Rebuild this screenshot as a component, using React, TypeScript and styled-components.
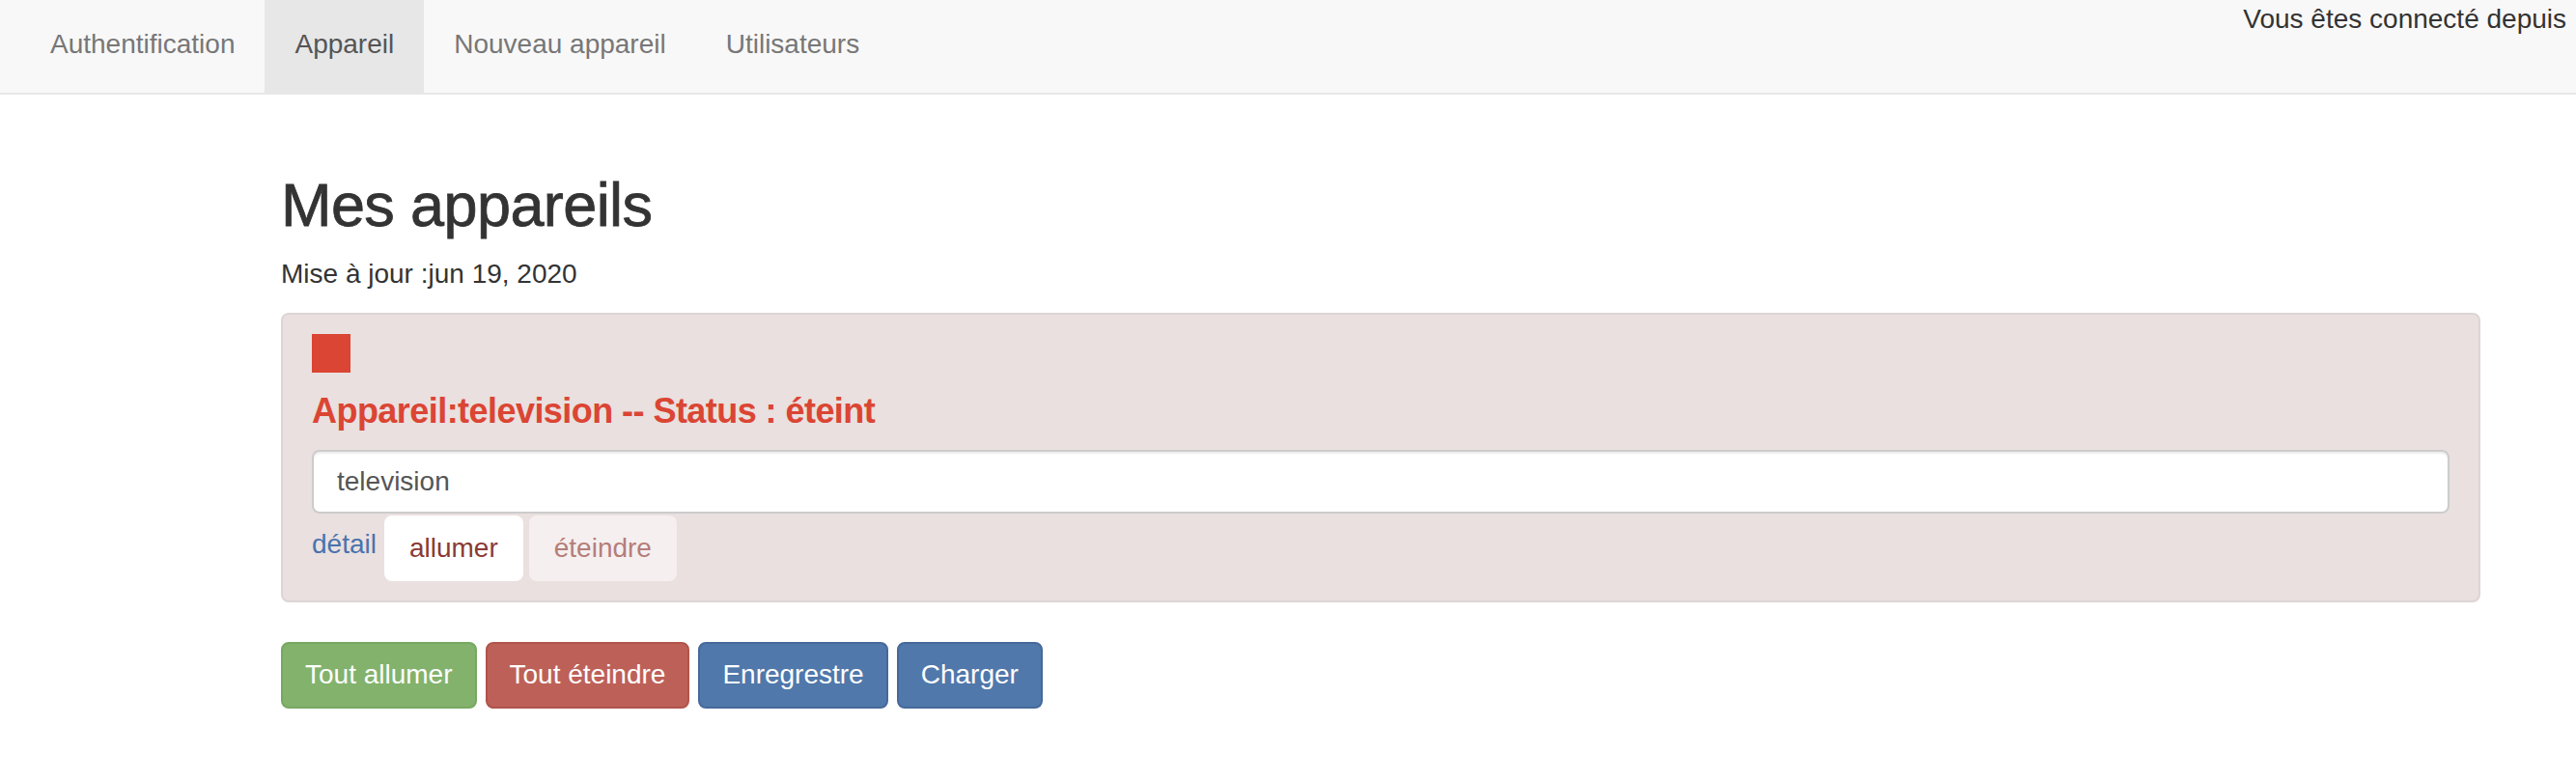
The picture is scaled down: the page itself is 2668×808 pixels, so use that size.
import React from "react";
import styled, { createGlobalStyle } from "styled-components";

const Global = createGlobalStyle`
  html, body { margin: 0; padding: 0; background: #ffffff; }
  body { font-family: "Liberation Sans", Arial, sans-serif; color: #333; }
  * { box-sizing: border-box; }
`;

const NavBar = styled.header`
  display: flex;
  justify-content: space-between;
  align-items: flex-start;
  height: 98px;
  background: #f8f8f8;
  border-bottom: 2px solid #e7e7e7;
`;

const NavList = styled.ul`
  display: flex;
  margin: 0;
  padding: 0 0 0 21px;
  list-style: none;
`;

const NavItem = styled.li<{ $active?: boolean }>`
  padding: 26px 31px 30px;
  font-size: 28px;
  line-height: 40px;
  color: ${(p) => (p.$active ? "#555" : "#777")};
  background: ${(p) => (p.$active ? "#e7e7e7" : "transparent")};
  white-space: nowrap;
`;

const NavText = styled.div`
  padding-right: 10px;
  font-size: 28px;
  line-height: 40px;
  color: #333;
  white-space: nowrap;
`;

const Main = styled.main`
  padding: 80px 99px 40px 291px;
`;

const Title = styled.h1`
  margin: 0 0 17px;
  font-size: 63px;
  font-weight: 400;
  line-height: 1.1;
  letter-spacing: -0.6px;
  color: #333;
  -webkit-text-stroke: 0.8px #333;
`;

const UpdateLine = styled.p`
  margin: 0 0 20px;
  font-size: 28px;
  line-height: 40px;
  color: #333;
`;

const DevicePanel = styled.section`
  display: flex;
  flex-direction: column;
  padding: 20px 30px;
  background: #e9e0df;
  border: 2px solid #ddd5d4;
  border-radius: 8px;
  margin-bottom: 41px;
`;

const StatusSquare = styled.div<{ $on?: boolean }>`
  width: 40px;
  height: 40px;
  background: ${(p) => (p.$on ? "#5cb85c" : "#db4533")};
`;

const DeviceTitle = styled.h4`
  margin: 20px 0 20px;
  font-size: 36px;
  font-weight: 700;
  line-height: 39.6px;
  letter-spacing: -0.55px;
  color: #db4533;
`;

const NameInput = styled.input`
  width: 100%;
  height: 66px;
  padding: 0 24px;
  font-family: "Liberation Sans", Arial, sans-serif;
  font-size: 28px;
  color: #555;
  background: #fff;
  border: 2px solid #ccc;
  border-radius: 8px;
  box-shadow: inset 0 2px 2px rgba(0, 0, 0, 0.075);
  outline: none;
`;

const ActionRow = styled.div`
  display: flex;
  align-items: flex-start;
  margin-top: 2px;
`;

const DetailLink = styled.a`
  padding-top: 10px;
  margin-right: 8px;
  font-size: 28px;
  line-height: 40px;
  color: #4a73ad;
  text-decoration: none;
`;

const SmallButton = styled.button<{ $muted?: boolean }>`
  margin-right: 6px;
  padding: 12px 24px;
  font-family: "Liberation Sans", Arial, sans-serif;
  font-size: 28px;
  line-height: 40px;
  border: 2px solid transparent;
  border-radius: 8px;
  background: ${(p) => (p.$muted ? "#f5efef" : "#ffffff")};
  color: ${(p) => (p.$muted ? "#b57d79" : "#8a3a34")};
  cursor: pointer;
`;

const Toolbar = styled.div`
  display: flex;
  gap: 9px;
`;

const tones = {
  success: { bg: "#83b26d", border: "#77a862" },
  danger: { bg: "#bd6158", border: "#b0544b" },
  primary: { bg: "#5078aa", border: "#46699a" },
};

const ToolButton = styled.button<{ $tone: keyof typeof tones }>`
  padding: 12px 23px 13px;
  font-family: "Liberation Sans", Arial, sans-serif;
  font-size: 28px;
  line-height: 40px;
  color: #fff;
  background: ${(p) => tones[p.$tone].bg};
  border: 2px solid ${(p) => tones[p.$tone].border};
  border-radius: 8px;
  cursor: pointer;
  white-space: nowrap;
`;

export default function App() {
  return (
    <>
      <Global />
      <NavBar>
        <NavList>
          <NavItem>Authentification</NavItem>
          <NavItem $active>Appareil</NavItem>
          <NavItem>Nouveau appareil</NavItem>
          <NavItem>Utilisateurs</NavItem>
        </NavList>
        <NavText>Vous êtes connecté depuis</NavText>
      </NavBar>
      <Main>
        <Title>Mes appareils</Title>
        <UpdateLine>Mise à jour :jun 19, 2020</UpdateLine>
        <DevicePanel>
          <StatusSquare />
          <DeviceTitle>Appareil:television -- Status : éteint</DeviceTitle>
          <NameInput defaultValue="television" />
          <ActionRow>
            <DetailLink href="#">détail</DetailLink>
            <SmallButton>allumer</SmallButton>
            <SmallButton $muted>éteindre</SmallButton>
          </ActionRow>
        </DevicePanel>
        <Toolbar>
          <ToolButton $tone="success">Tout allumer</ToolButton>
          <ToolButton $tone="danger">Tout éteindre</ToolButton>
          <ToolButton $tone="primary">Enregrestre</ToolButton>
          <ToolButton $tone="primary">Charger</ToolButton>
        </Toolbar>
      </Main>
    </>
  );
}
